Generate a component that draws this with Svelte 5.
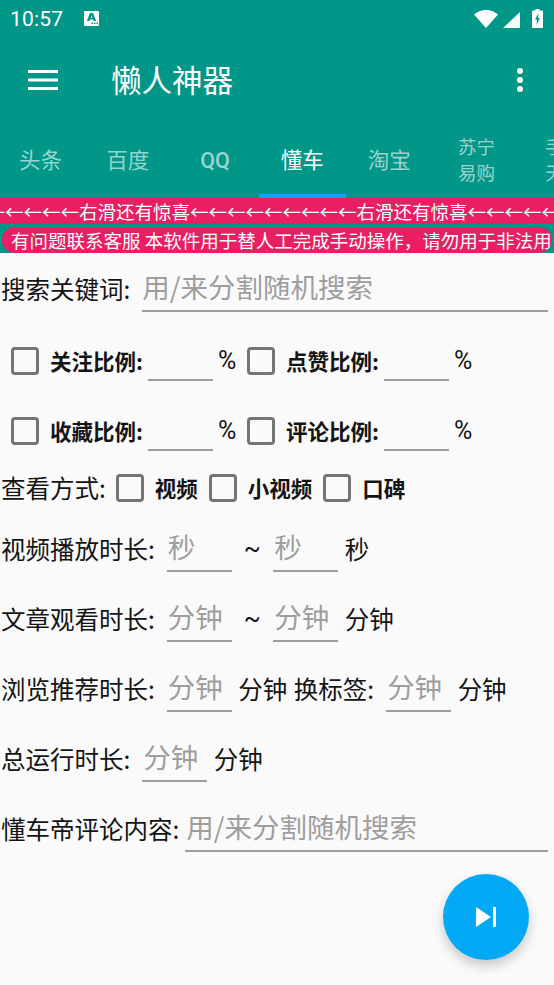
<script>
	const tabs = [
		{ label: '头条' },
		{ label: '百度' },
		{ label: 'QQ', latin: true },
		{ label: '懂车', active: true },
		{ label: '淘宝' },
		{ label: '苏宁易购', small: true },
		{ label: '手机天猫', small: true }
	];
	const arrows = '←'.repeat(9);
</script>

<div class="screen">
	<header class="head">
		<div class="status">
			<span class="time">10:57</span>
			<svg class="note" viewBox="0 0 15 15"><path fill="#fff" d="M1 0h13a1 1 0 0 1 1 1v13a1 1 0 0 1-1 1H1a1 1 0 0 1-1-1V1a1 1 0 0 1 1-1z" /><path fill="#009688" fill-rule="evenodd" d="M5.900 1.900h3.200l3 8.100H9.500L9 8.500H6L5.500 10H2.900zM7.500 4.500l-.8 2.200h1.600zM7.500 11.500h1.500v1.600H7.500zM10 11.500h1.500v1.600H10zM12.500 11.500H14v1.600h-1.500z" /></svg>
			<span class="grow"></span>
			<svg class="wifi" viewBox="0 0 24 18"><path fill="#fff" d="M12 18 0 4.500C3 1.800 7.200 0 12 0s9 1.800 12 4.500z" /></svg>
			<svg class="signal" viewBox="0 0 17 16"><path fill="#fff" d="M0 16 17 0v16z" /></svg>
			<svg class="battery" viewBox="0 0 11 19"><path fill="#fff" d="M3.500 0h4v1.500H10a1 1 0 0 1 1 1V18a1 1 0 0 1-1 1H1a1 1 0 0 1-1-1V2.500a1 1 0 0 1 1-1h2.500z" /><path fill="#009688" d="M6.500 4 3 10.500h2L4.500 16 8 9H6z" /></svg>
		</div>
		<div class="toolbar">
			<svg class="menu" viewBox="0 0 30 20"><path fill="#fff" d="M0 0h30v3H0zM0 8.500h30v3H0zM0 17h30v3H0z" /></svg>
			<h1>懒人神器</h1>
			<span class="grow"></span>
			<svg class="more" viewBox="0 0 6 24"><circle fill="#fff" cx="3" cy="3" r="3" /><circle fill="#fff" cx="3" cy="12" r="3" /><circle fill="#fff" cx="3" cy="21" r="3" /></svg>
		</div>
		<nav class="tabs">
			{#each tabs as tab}
				<div class="tab" class:active={tab.active} class:small={tab.small} class:latin={tab.latin}><span>{tab.label}</span></div>
			{/each}
		</nav>
	</header>

	<div class="ribbon"><span>{arrows}</span><span>右滑还有惊喜</span><span>{arrows}</span><span>右滑还有惊喜</span><span>{arrows}</span></div>
	<div class="notice-wrap">
		<div class="notice">有问题联系客服 本软件用于替人工完成手动操作，请勿用于非法用</div>
	</div>

	<main class="form">
		<div class="row search">
			<span>搜索关键词:</span>
			<div class="field wide">用/来分割随机搜索</div>
		</div>

		<div class="row ratio first">
			<span class="box"></span><b>关注比例:</b><div class="field num"></div><span class="pct">%</span>
			<span class="box"></span><b>点赞比例:</b><div class="field num"></div><span class="pct">%</span>
		</div>
		<div class="row ratio">
			<span class="box"></span><b>收藏比例:</b><div class="field num"></div><span class="pct">%</span>
			<span class="box"></span><b>评论比例:</b><div class="field num"></div><span class="pct">%</span>
		</div>

		<div class="row view">
			<span>查看方式:</span>
			<span class="box"></span><b>视频</b>
			<span class="box"></span><b>小视频</b>
			<span class="box"></span><b>口碑</b>
		</div>

		<div class="row time-row">
			<span>视频播放时长:</span><div class="field num">秒</div><span class="tilde">~</span><div class="field num">秒</div><span>秒</span>
		</div>
		<div class="row time-row">
			<span>文章观看时长:</span><div class="field num">分钟</div><span class="tilde">~</span><div class="field num">分钟</div><span>分钟</span>
		</div>
		<div class="row time-row">
			<span>浏览推荐时长:</span><div class="field num">分钟</div><span class="swap">分钟 换标签:</span><div class="field num">分钟</div><span>分钟</span>
		</div>
		<div class="row time-row">
			<span>总运行时长:</span><div class="field num">分钟</div><span>分钟</span>
		</div>
		<div class="row time-row">
			<span>懂车帝评论内容:</span><div class="field wide">用/来分割随机搜索</div>
		</div>
	</main>

	<button class="fab" aria-label="开始">
		<svg viewBox="0 0 20 20"><path fill="#fff" d="M0 0 15 10 0 20zM17 0h3v20h-3z" /></svg>
	</button>
</div>

<style>
	:global(body) {
		margin: 0;
		background: #fafafa;
	}

	.screen {
		position: relative;
		width: 554px;
		height: 985px;
		overflow: hidden;
		background: #fafafa;
		color: #141414;
		font-family: 'Noto Sans CJK SC', 'Noto Sans', sans-serif;
		font-size: 24.500px;
		line-height: 32px;
	}

	.grow {
		flex: 1;
	}

	.head {
		background: #009688;
		color: #fff;
		height: 198px;
	}

	.status {
		display: flex;
		align-items: center;
		height: 37px;
		padding: 0 11px 0 10px;
	}

	.time {
		font-family: Roboto, sans-serif;
		font-size: 21px;
		letter-spacing: 0.2px;
	}

	.note {
		width: 15px;
		height: 15px;
		margin-left: 20.500px;
	}

	.wifi {
		width: 24px;
		height: 18px;
	}

	.signal {
		width: 17px;
		height: 16px;
		margin-left: 5px;
		margin-top: 2px;
	}

	.battery {
		width: 11px;
		height: 19px;
		margin-left: 12px;
	}

	.toolbar {
		display: flex;
		align-items: center;
		height: 86px;
		padding: 0 31px 0 28px;
	}

	.menu {
		width: 30px;
		height: 20px;
	}

	h1 {
		margin: -2px 0 0 53px;
		font-size: 30.500px;
		font-weight: 400;
		line-height: 40px;
	}

	.more {
		width: 6px;
		height: 24px;
	}

	.tabs {
		display: flex;
		height: 75px;
		margin-left: -3px;
	}

	.tab {
		flex: 0 0 87.200px;
		display: flex;
		align-items: center;
		justify-content: center;
		box-sizing: border-box;
		font-size: 21.500px;
		line-height: 28px;
		text-align: center;
		color: rgba(255, 255, 255, 0.6);
		border-bottom: 4px solid transparent;
	}

	.tab.small {
		padding: 0 24px;
		font-size: 18.500px;
		line-height: 26px;
	}

	.tab.latin {
		padding-top: 4px;
		font-family: Roboto, sans-serif;
		font-weight: 500;
	}

	.tab.active {
		color: #fff;
		border-bottom-color: #03a9f4;
	}

	.ribbon {
		display: flex;
		justify-content: center;
		height: 26px;
		padding-right: 7.500px;
		overflow: hidden;
		background: #e91e63;
		color: #fff;
		font-size: 18.500px;
		line-height: 26px;
		white-space: nowrap;
	}

	.ribbon span {
		flex: none;
	}

	.notice-wrap {
		background: #009688;
		height: 29px;
		padding: 3px 2px 0;
		box-sizing: border-box;
	}

	.notice {
		height: 26px;
		padding-left: 9px;
		border-radius: 13px;
		background: #e91e63;
		color: #fff;
		font-size: 18.500px;
		line-height: 26px;
		white-space: nowrap;
		overflow: hidden;
	}

	.form {
		display: flex;
		flex-direction: column;
		padding: 13px 6px 0 1px;
	}

	.row {
		display: flex;
		align-items: center;
	}

	.field {
		box-sizing: border-box;
		height: 46px;
		line-height: 40px;
		color: #9e9e9e;
		border-bottom: 2px solid #9e9e9e;
		white-space: nowrap;
		font-size: 27.500px;
	}

	.field.wide {
		flex: 1;
		margin-left: 6px;
		padding-left: 1px;
	}

	.search .field.wide {
		margin-left: 12px;
		padding-left: 0;
	}

	.field.num {
		flex: none;
		width: 65px;
		margin: 0 6.500px 0 12px;
		padding-left: 1px;
	}

	.box {
		box-sizing: border-box;
		flex: none;
		width: 28px;
		height: 28px;
		border: 3px solid #757575;
		border-radius: 4px;
	}

	b {
		font-weight: 700;
		font-size: 21.500px;
	}

	.ratio {
		height: 70px;
		padding-left: 10px;
	}

	.ratio.first {
		margin-top: 14px;
	}

	.ratio b {
		margin-left: 11px;
	}

	.ratio .field.num {
		height: 40px;
		margin: 0 5px 0 5px;
	}

	.pct {
		width: 29px;
		font-family: Roboto, sans-serif;
		font-size: 25px;
	}

	.view {
		height: 46px;
		margin-top: -1px;
	}

	.view .box {
		margin-left: 10px;
	}

	.view b {
		margin-left: 11px;
	}

	.view b + .box {
		margin-left: 11px;
	}

	.time-row {
		height: 46px;
		margin-top: 24px;
	}

	.view + .time-row {
		margin-top: 15px;
	}

	.swap {
		word-spacing: 1px;
	}

	.tilde {
		box-sizing: border-box;
		width: 23px;
		padding-left: 5px;
		text-align: center;
		font-family: Roboto, sans-serif;
		font-size: 25px;
	}

	.fab {
		position: absolute;
		left: 443px;
		top: 874px;
		width: 86px;
		height: 86px;
		padding: 0;
		border: 0;
		border-radius: 50%;
		background: #03a9f4;
		box-shadow: 0 6px 12px rgba(0, 0, 0, 0.2);
		display: flex;
		align-items: center;
		justify-content: center;
	}

	.fab svg {
		width: 20px;
		height: 20px;
	}
</style>
